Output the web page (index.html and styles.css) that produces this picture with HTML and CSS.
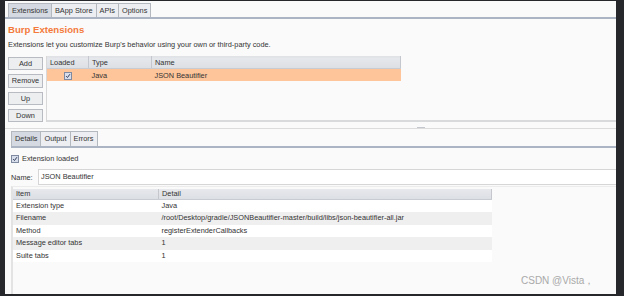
FILE: index.html
```html
<!DOCTYPE html>
<html lang="en">
<head>
  <meta charset="UTF-8">
  <title>Burp Extensions</title>
  <link rel="stylesheet" href="styles.css">
</head>
<body>
  <div class="window">
    <div class="tabs top-tabs">
      <span class="tab active">Extensions</span>
      <span class="tab">BApp Store</span>
      <span class="tab">APIs</span>
      <span class="tab">Options</span>
    </div>

    <div class="section">
      <h1 class="title">Burp Extensions</h1>
      <p class="desc">Extensions let you customize Burp's behavior using your own or third-party code.</p>

      <div class="ext-area">
        <div class="buttons">
          <button>Add</button>
          <button>Remove</button>
          <button>Up</button>
          <button>Down</button>
        </div>
        <div class="pane ext-pane">
          <table class="grid ext-table">
            <tr>
              <th class="c-loaded">Loaded</th>
              <th class="c-type">Type</th>
              <th>Name</th>
            </tr>
            <tr class="selected">
              <td class="center"><span class="check small">
                <svg viewBox="0 0 8 8" width="6" height="6"><path d="M1.5 4.2 L3.3 6 L6.6 1.6" fill="none" stroke="#2e3a55" stroke-width="1.3"/></svg>
              </span></td>
              <td>Java</td>
              <td>JSON Beautifier</td>
            </tr>
          </table>
        </div>
      </div>
    </div>

    <div class="splitter"><span class="grip"></span></div>

    <div class="lower">
      <div class="tabs sub-tabs">
        <span class="tab active">Details</span>
        <span class="tab">Output</span>
        <span class="tab">Errors</span>
      </div>

      <label class="loaded">
        <span class="check">
          <svg viewBox="0 0 8 8" width="6" height="6"><path d="M1.5 4.2 L3.3 6 L6.6 1.6" fill="none" stroke="#2e3a55" stroke-width="1.3"/></svg>
        </span>
        Extension loaded
      </label>

      <div class="name-row">
        <span class="name-label">Name:</span>
        <div class="name-input">JSON Beautifier</div>
      </div>

      <div class="pane detail-pane">
        <table class="grid detail-table">
          <tr><th class="c-item">Item</th><th>Detail</th></tr>
          <tr><td>Extension type</td><td>Java</td></tr>
          <tr class="alt"><td>Filename</td><td>/root/Desktop/gradle/JSONBeautifier-master/build/libs/json-beautifier-all.jar</td></tr>
          <tr><td>Method</td><td>registerExtenderCallbacks</td></tr>
          <tr class="alt"><td>Message editor tabs</td><td>1</td></tr>
          <tr><td>Suite tabs</td><td>1</td></tr>
        </table>
        <div class="watermark">CSDN @Vista，</div>
      </div>
    </div>
  </div>
</body>
</html>
```

FILE: styles.css
```css
body {
  margin: 0;
  padding: 1px 8px 2px 5px;
  background: #26272b;
  font-family: "Liberation Sans", Arial, sans-serif;
  font-size: 7.35px;
  color: #333;
}
.window {
  height: 293px;
  background: #fafafa;
  display: flex;
  flex-direction: column;
  overflow: hidden;
}
.tabs {
  display: flex;
  border-bottom: 2px solid #aab4c3;
}
.top-tabs {
  padding: 2px 0 0 3px;
  height: 14px;
}
.tab {
  border: 1px solid #b4b9c0;
  border-bottom: none;
  background: #eceef1;
  padding: 0 3px;
  line-height: 13px;
  margin-right: -1px;
  color: #333;
}
.tab.active {
  background: #d5dae2;
}
.section {
  padding: 0 0 0 3px;
}
.title {
  margin: 5px 0 0;
  font-size: 9.6px;
  font-weight: bold;
  color: #f47a3c;
  line-height: 12px;
}
.desc {
  margin: 4px 0 0;
  line-height: 10px;
}
.ext-area {
  display: flex;
  margin-top: 6px;
  height: 66px;
}
.buttons {
  display: flex;
  flex-direction: column;
  gap: 4px;
  width: 35px;
  padding-top: 1px;
  margin-right: 3px;
}
button {
  font: inherit;
  height: 14px;
  padding: 0;
  background: #eceef0;
  border: 1px solid #b8bcc2;
  color: #333;
}
.pane {
  flex: 1;
  border-left: 1px solid #d8d8d8;
  border-bottom: 2px solid #d8dadc;
  background: #fafafa;
}
.grid {
  border-collapse: collapse;
  table-layout: fixed;
}
.grid th {
  text-align: left;
  font-weight: normal;
  background: linear-gradient(#e6e8ec, #dcdfe4);
  border-right: 1px solid #c4c8ce;
  border-bottom: 1px solid #c8ccd2;
  height: 10px;
  padding: 0 3px;
  line-height: 10px;
}
.grid td {
  padding: 0 3px;
  white-space: nowrap;
}
.ext-table {
  width: 354px;
}
.ext-table th {
  height: 11px;
  border-top: 1px solid #e0e2e6;
}
.ext-table td {
  height: 12px;
}
.c-loaded { width: 35px; }
.c-type { width: 56px; }
.selected td {
  background: #ffc59a;
}
.center {
  text-align: center;
}
.check {
  display: inline-flex;
  align-items: center;
  justify-content: center;
  width: 6px;
  height: 6px;
  border: 1px solid #7f8aa0;
  background: #d7ddea;
  vertical-align: middle;
}
.splitter {
  position: relative;
  height: 6px;
  border-bottom: 1px solid #dcdcdc;
}
.grip {
  position: absolute;
  left: 412px;
  top: 5px;
  width: 8px;
  height: 1px;
  background: #c4c8ce;
}
.lower {
  padding: 2px 0 0 6px;
  display: flex;
  flex-direction: column;
  flex: 1;
}
.sub-tabs {
  height: 15px;
}
.sub-tabs .tab {
  line-height: 14px;
}
.loaded {
  display: flex;
  align-items: center;
  gap: 3px;
  margin-top: 6px;
  line-height: 10px;
}
.name-row {
  display: flex;
  align-items: center;
  margin-top: 5px;
  margin-left: -2px;
}
.name-label {
  width: 27px;
  padding-left: 2px;
}
.name-input {
  flex: 1;
  height: 14px;
  line-height: 14px;
  background: #fff;
  border: 1px solid #d6d6d6;
  border-right: none;
  padding-left: 2px;
}
.detail-pane {
  position: relative;
  margin-top: 1px;
  border-left: 2px solid #e3e3e3;
  border-top: 1px solid #ececec;
  border-bottom: none;
  padding-top: 2px;
}
.detail-table {
  width: 479px;
}
.detail-table td {
  height: 12.4px;
  line-height: 12.4px;
  background: #fff;
}
.detail-table tr.alt td {
  background: #efefef;
}
.c-item { width: 139px; }
.watermark {
  position: absolute;
  left: 508px;
  bottom: 6px;
  font-size: 10px;
  color: #a9a9a9;
}
```
